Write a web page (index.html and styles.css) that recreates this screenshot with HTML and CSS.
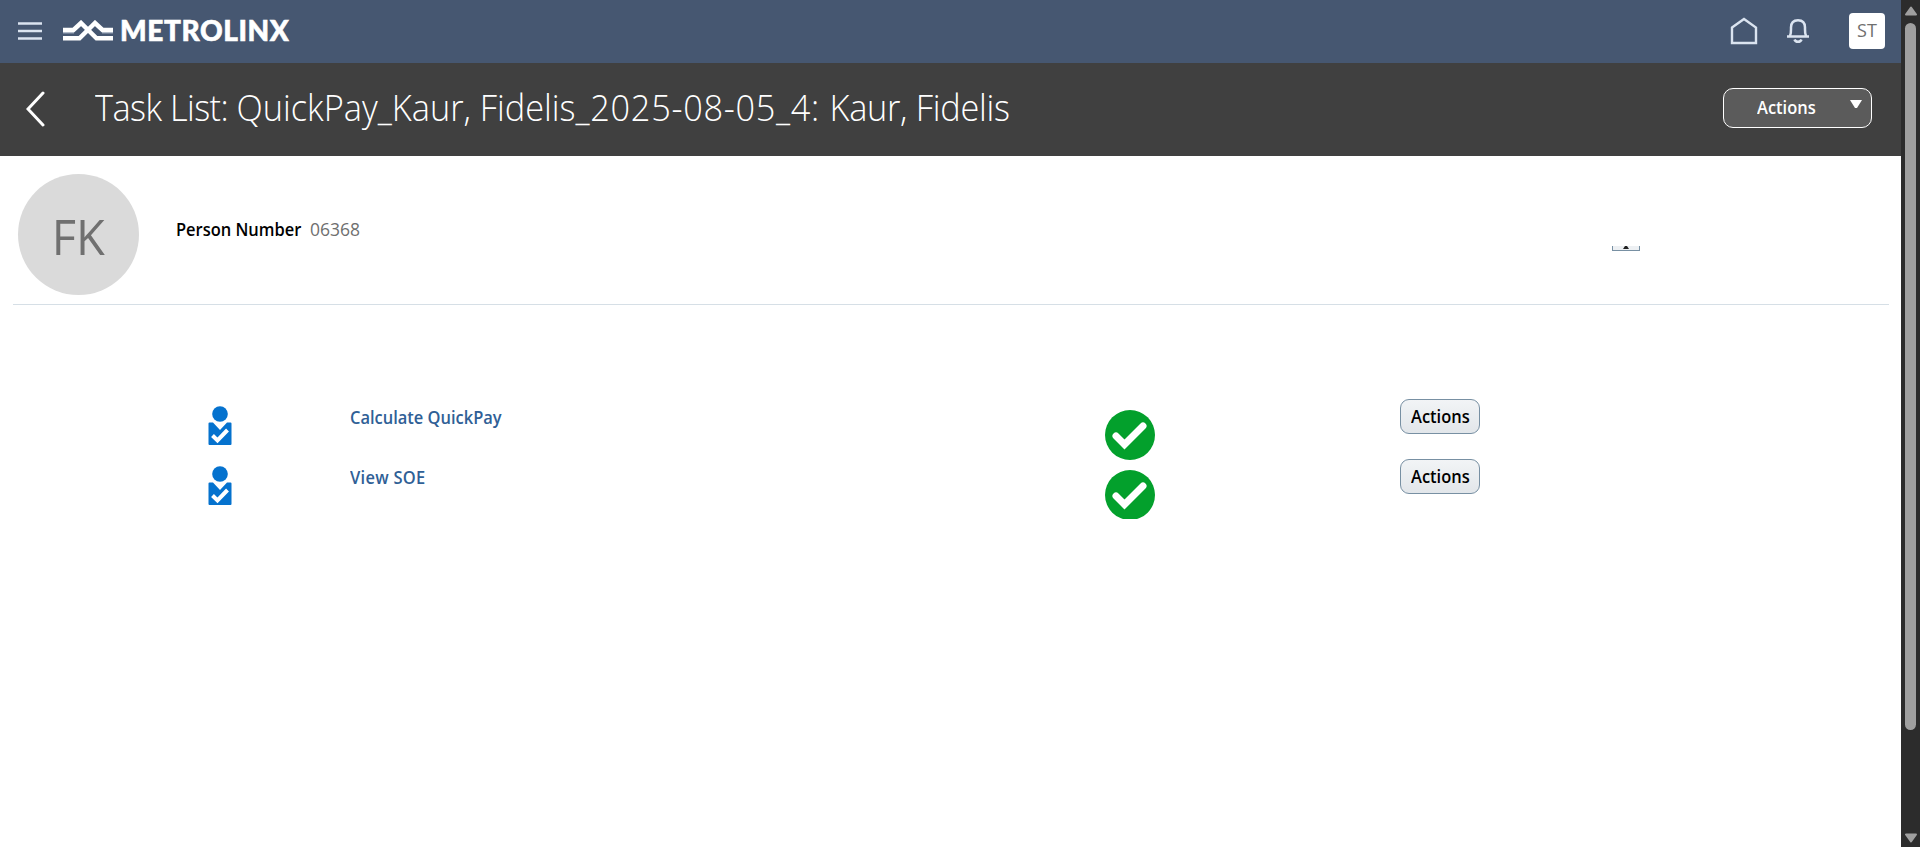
FILE: index.html
```html
<!DOCTYPE html>
<html lang="en">
<head>
<meta charset="utf-8">
<title>Task List</title>
<link rel="stylesheet" href="styles.css">
</head>
<body>
<div class="page">
  <header class="topbar">
    <svg class="burger" width="24" height="18" viewBox="0 0 24 18"><path d="M0 1.5h24M0 9h24M0 16.5h24"/></svg>
    <div class="brand">
      <svg class="mark" width="50" height="21" viewBox="0 0 50 21"><path class="thin" d="M0 12.500h11M39 12.500h11"/><path d="M0 10h10.500L18 3 33.500 18.300H50M0 18.300h16.500L32 3 39.500 10H50"/></svg>
      <span class="brand-name">METROLINX</span>
    </div>
    <svg class="home" width="28" height="28" viewBox="0 0 28 28"><path d="M2 10.500 14 2l12 8.500V26H2z"/></svg>
    <svg class="bell" width="22" height="26" viewBox="0 0 22 26"><path d="M0 18.500h22M3 18c1.300-3 1-5.500 1-8.500C4 5 6.500 2.200 11 2.200s7 2.800 7 7.300c0 3-.3 5.500 1 8.500M7.500 21.500c1 3 6 3 7 0"/></svg>
    <div class="user">ST</div>
  </header>
  <div class="titlebar">
    <svg class="back" width="20" height="38" viewBox="0 0 20 38"><path d="M17 3 2 19l15 16"/></svg>
    <h1 class="title"><span class="lead">Task List: </span>QuickPay_Kaur, Fidelis<span class="date">_2025-08-05_4: </span><span class="name">Kaur, Fidelis</span></h1>
    <button class="menu-button"><span class="narrow">Actions</span><svg width="12" height="8" viewBox="0 0 12 8"><path d="M0 0h12L7 8H5z"/></svg></button>
  </div>
  <section class="person">
    <div class="avatar"><span>FK</span></div>
    <div class="label narrow">Person Number</div>
    <div class="number">06368</div>
    <div class="clipped"><svg width="6" height="3" viewBox="0 0 6 3"><path d="M0 3 2 0h2l2 3z"/></svg></div>
  </section>
  <main class="tasks">
    <div class="task">
      <svg class="who" width="24" height="40" viewBox="0 0 24 40"><circle cx="12" cy="8" r="7.800"/><path d="M1.500 16.500H5l7 7.500 7-7.500h3.500q1 0 1 1V38q0 1-1 1h-21q-1 0-1-1V17.500q0-1 1-1z"/><path class="tick" d="m4.500 29.500 5 5L19.500 24"/></svg>
      <a class="link narrow">Calculate QuickPay</a>
      <div class="status"><svg width="50" height="50" viewBox="0 0 50 50"><circle cx="25" cy="25" r="25"/><path d="m11 26 8.500 8.500L38 16"/></svg></div>
      <button class="action"><span class="narrow">Actions</span></button>
    </div>
    <div class="task">
      <svg class="who" width="24" height="40" viewBox="0 0 24 40"><circle cx="12" cy="8" r="7.800"/><path d="M1.500 16.500H5l7 7.500 7-7.500h3.500q1 0 1 1V38q0 1-1 1h-21q-1 0-1-1V17.500q0-1 1-1z"/><path class="tick" d="m4.500 29.500 5 5L19.500 24"/></svg>
      <a class="link soe narrow">View SOE</a>
      <div class="status cut"><svg width="50" height="50" viewBox="0 0 50 50"><circle cx="25" cy="25" r="25"/><path d="m11 26 8.500 8.500L38 16"/></svg></div>
      <button class="action"><span class="narrow">Actions</span></button>
    </div>
  </main>
</div>
<aside class="scrollbar">
  <svg width="12" height="10" viewBox="0 0 12 10"><path d="M6 1.500 11 8.500H1z"/></svg>
  <div class="thumb"></div>
  <svg class="down" width="12" height="10" viewBox="0 0 12 10"><path d="M1 1.500h10L6 8.500z"/></svg>
</aside>
</body>
</html>
```
FILE: styles.css
```css
* { box-sizing: border-box; }
body { margin: 0; height: 847px; display: flex; overflow: hidden; background: #fff; font-family: "Open Sans", "Noto Sans", sans-serif; }
svg { display: block; flex: none; }
button { margin: 0; padding: 0; font-family: inherit; }
.page { width: 1901px; flex: none; }
.narrow { transform: scaleX(0.94); transform-origin: left; }

.topbar { height: 63px; padding-left: 18px; display: flex; background: #465771; }
.burger { margin-top: 22px; fill: none; stroke: #dbe4f0; stroke-width: 2.4; }
.brand { display: flex; margin-left: 21px; }
.mark { margin-top: 20px; fill: none; stroke: #fff; stroke-width: 4.5; }
.mark .thin { stroke: #97a4b7; stroke-width: 2; }
.brand-name { margin: 12px 0 0 7px; width: 171px; color: #fff; font: 900 28px/36px Lato, sans-serif; letter-spacing: 0.6px; -webkit-text-stroke: 0.6px #fff; white-space: nowrap; }
.home { margin: 17px 0 0 auto; fill: none; stroke: #dbe4f0; stroke-width: 2.4; }
.bell { margin: 18px 0 0 29px; fill: none; stroke: #dbe4f0; stroke-width: 2.5; }
.user { width: 36px; height: 36px; margin: 13px 16px 0 40px; border-radius: 4px; background: #fff; color: #6f6f6f; font-size: 18px; line-height: 35px; text-align: center; }

.titlebar { height: 93px; display: flex; background: #404040; padding: 25px 29px 0 26px; }
.back { margin-top: 2px; fill: none; stroke: #fff; stroke-width: 3; stroke-linecap: round; }
.title { margin: -7px 0 0 49px; height: 52px; color: #fff; font-size: 37.5px; font-weight: 300; line-height: 52px; white-space: nowrap; transform: scaleX(0.915); transform-origin: left; }
.title .lead { letter-spacing: -0.6px; }
.title .date { letter-spacing: 0.75px; }
.title .name { letter-spacing: -0.3px; }
.menu-button { display: flex; width: 149px; height: 40px; margin-left: auto; padding-left: 33px; border: 1px solid #fff; border-radius: 10px; background: #5b5b5b; color: #fff; font-size: 17.5px; font-weight: 600; line-height: 37px; }
.menu-button svg { margin: 11px 0 0 33px; fill: #fff; }
.menu-button span { width: 60px; white-space: nowrap; text-align: left; }

.person { display: flex; height: 149px; margin: 0 12px 0 13px; padding: 18px 0 0 5px; border-bottom: 1px solid #d6dfe6; }
.avatar { width: 121px; height: 121px; border-radius: 50%; background: #dadada; color: #707070; font-size: 50px; line-height: 124px; text-align: center; }
.avatar span { display: inline-block; transform: scaleX(0.94); }
.label { margin: 42px 0 0 37px; width: 134px; height: 26px; font-size: 17.5px; font-weight: 600; line-height: 26px; white-space: nowrap; color: #000; }
.number { margin-top: 42px; font-size: 17.5px; line-height: 26px; color: #6f6f6f; }
.clipped { display: flex; justify-content: center; width: 28px; height: 5px; margin: 72px 249px 0 auto; border: 1px solid #7890a3; border-top: 0; background: #edf0f3; }
.clipped svg { fill: #222; }

.tasks { padding: 94px 0 0 208px; }
.task { display: flex; height: 60px; }
.who { margin-top: 7px; fill: #0572ce; }
.who .tick { fill: none; stroke: #fff; stroke-width: 4; }
.link { width: 755px; height: 26px; margin: 5px 0 0 118px; color: #2f6096; font-size: 17.5px; font-weight: 600; line-height: 26px; white-space: nowrap; }
.link.soe { letter-spacing: 0.3px; }
.status { height: 50px; margin-top: 11px; overflow: hidden; }
.status.cut { height: 49px; }
.status circle { fill: #03a02c; }
.status path { fill: none; stroke: #fff; stroke-width: 7; stroke-linecap: round; }
.action { width: 80px; height: 35px; margin-left: 245px; padding-left: 10px; border: 1px solid #7890a3; border-radius: 9px; background: linear-gradient(#f2f4f6, #e2e6ea); color: #000; font-size: 17.5px; font-weight: 600; line-height: 31px; text-align: left; }
.action span { display: block; white-space: nowrap; }

.scrollbar { width: 19px; height: 847px; padding: 6px 4px 4px; display: flex; flex-direction: column; align-items: center; background: #2c2c2c; }
.scrollbar svg { fill: #9f9f9f; stroke: #9f9f9f; stroke-width: 2; stroke-linejoin: round; }
.thumb { width: 11px; height: 707px; margin-top: 7px; border-radius: 6px; background: #9f9f9f; }
.down { margin-top: auto; }
```
